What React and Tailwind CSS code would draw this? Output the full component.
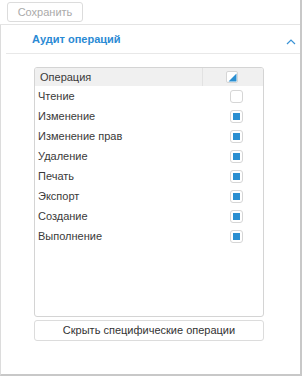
import React from 'react'

const OPS = [
  { name: 'Чтение', on: false },
  { name: 'Изменение', on: true },
  { name: 'Изменение прав', on: true },
  { name: 'Удаление', on: true },
  { name: 'Печать', on: true },
  { name: 'Экспорт', on: true },
  { name: 'Создание', on: true },
  { name: 'Выполнение', on: true },
]

function Check({ on }) {
  return (
    <span className="w-[13px] h-[13px] rounded-[3px] border border-[#d6d6d6] bg-white flex items-center justify-center">
      {on && <span className="w-[7px] h-[7px] bg-[#2b8fd1]" />}
    </span>
  )
}

export default function App() {
  return (
    <div className="w-[302px] h-[376px] bg-white text-[11px] text-[#3a3a3a]" style={{ fontFamily: '"Liberation Sans", Arial, sans-serif' }}>
      <div className="h-[376px] border-r-2 border-[#c8c8c8] flex flex-col">
        {/* toolbar */}
        <div className="h-[25px] border-b border-[#e4e4e4] pt-[2px] pl-[7px]">
          <button className="w-[76px] h-[20px] rounded-[3px] border border-[#dcdcdc] bg-white text-[#aaa] text-[11px] leading-none">
            Сохранить
          </button>
        </div>

        <div className="flex-1 border-l border-b-2 border-[#c8c8c8] border-l-[#dcdcdc] flex flex-col">
          {/* section header */}
          <div className="ml-[5px] h-[29px] border-b border-[#e8e8e8] flex items-center justify-between pl-[26px] pr-[4px]">
            <span className="font-bold text-[#2a8ad4] text-[11px] pt-[1px]">Аудит операций</span>
            <svg width="10" height="7" viewBox="0 0 10 7" className="mt-[4px]">
              <path d="M1 6 L5 2 L9 6" fill="none" stroke="#3a93d6" strokeWidth="1.2" />
            </svg>
          </div>

          {/* table */}
          <div className="ml-[33px] mt-[13px] w-[230px] h-[250px] border border-[#d4d4d4] rounded-[3px] overflow-hidden">
            <div className="h-[18px] bg-[#f0f0f0] flex items-center">
              <span className="flex-1 pl-[5px] border-r border-[#e2e2e2] h-full flex items-center">Операция</span>
              <span className="w-[60px] h-full flex items-center pl-[23px]">
                <span className="w-[12px] h-[12px] rounded-[2px] border border-[#d6d6d6] bg-white relative overflow-hidden">
                  <svg width="10" height="10" viewBox="0 0 10 10" className="absolute left-0 top-0">
                    <path d="M9.5 1.5 L9.5 9.5 L1.5 9.5 Z" fill="#2b8fd1" />
                  </svg>
                </span>
              </span>
            </div>
            <div>
              {OPS.map((op) => (
                <div key={op.name} className="h-[20px] flex items-center justify-between pl-[3px] pr-[20px]">
                  <span>{op.name}</span>
                  <Check on={op.on} />
                </div>
              ))}
            </div>
          </div>

          <button className="ml-[33px] mt-[3px] w-[230px] h-[21px] rounded-[3px] border border-[#dcdcdc] bg-white text-[#333] text-[11px] leading-none">
            Скрыть специфические операции
          </button>
        </div>
      </div>
    </div>
  )
}
